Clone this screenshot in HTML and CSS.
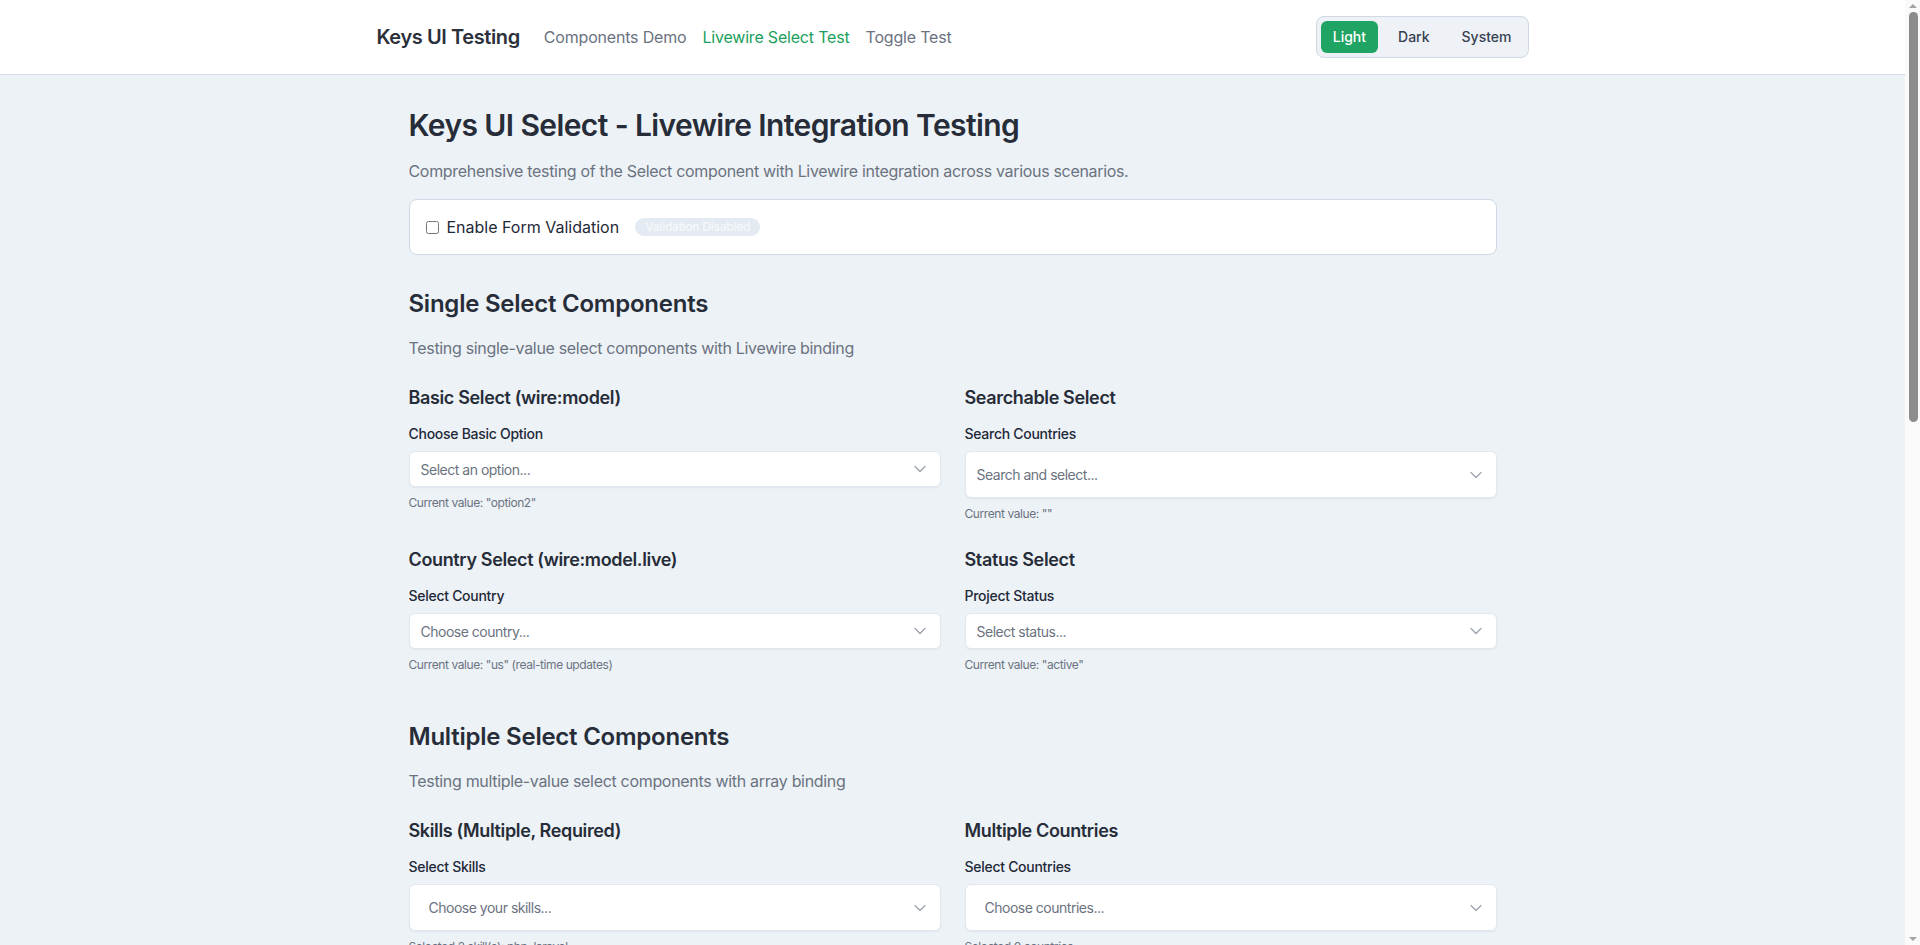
FILE: index.html
```html
<!DOCTYPE html>
<html lang="en">
<head>
<meta charset="utf-8">
<title>Keys UI Select - Livewire Integration Testing</title>
<link rel="stylesheet" href="styles.css">
</head>
<body>
<div class="shell">
<header class="topbar">
  <div class="topbar-inner">
    <div class="brand-group">
      <a class="brand" href="#">Keys UI Testing</a>
      <nav class="nav">
        <a class="nav-link" href="#">Components Demo</a>
        <a class="nav-link active" href="#">Livewire Select Test</a>
        <a class="nav-link" href="#">Toggle Test</a>
      </nav>
    </div>
    <div class="theme-switch">
      <button class="theme-btn active">Light</button>
      <button class="theme-btn">Dark</button>
      <button class="theme-btn">System</button>
    </div>
  </div>
</header>

<main class="page">
  <h1 class="page-title">Keys UI Select - Livewire Integration Testing</h1>
  <p class="lead">Comprehensive testing of the Select component with Livewire integration across various scenarios.</p>

  <div class="card validation-card">
    <label class="check-label"><input type="checkbox" class="check"> Enable Form Validation</label>
    <span class="badge">Validation Disabled</span>
  </div>

  <section class="section">
    <h2 class="section-title">Single Select Components</h2>
    <p class="section-desc">Testing single-value select components with Livewire binding</p>
    <div class="grid">
      <div class="field">
        <h3 class="field-title">Basic Select (wire:model)</h3>
        <label class="field-label">Choose Basic Option</label>
        <div class="select"><span>Select an option...</span><svg class="chev" width="12" height="8" viewBox="0 0 12 8"><path d="M1 1.5l5 5 5-5"/></svg></div>
        <p class="hint">Current value: "option2"</p>
      </div>
      <div class="field">
        <h3 class="field-title">Searchable Select</h3>
        <label class="field-label">Search Countries</label>
        <div class="select tall"><span>Search and select...</span><svg class="chev" width="12" height="8" viewBox="0 0 12 8"><path d="M1 1.5l5 5 5-5"/></svg></div>
        <p class="hint">Current value: ""</p>
      </div>
      <div class="field">
        <h3 class="field-title">Country Select (wire:model.live)</h3>
        <label class="field-label">Select Country</label>
        <div class="select"><span>Choose country...</span><svg class="chev" width="12" height="8" viewBox="0 0 12 8"><path d="M1 1.5l5 5 5-5"/></svg></div>
        <p class="hint">Current value: "us" (real-time updates)</p>
      </div>
      <div class="field">
        <h3 class="field-title">Status Select</h3>
        <label class="field-label">Project Status</label>
        <div class="select"><span>Select status...</span><svg class="chev" width="12" height="8" viewBox="0 0 12 8"><path d="M1 1.5l5 5 5-5"/></svg></div>
        <p class="hint">Current value: "active"</p>
      </div>
    </div>
  </section>

  <section class="section">
    <h2 class="section-title">Multiple Select Components</h2>
    <p class="section-desc">Testing multiple-value select components with array binding</p>
    <div class="grid">
      <div class="field">
        <h3 class="field-title">Skills (Multiple, Required)</h3>
        <label class="field-label">Select Skills</label>
        <div class="select multi"><span>Choose your skills...</span><svg class="chev" width="12" height="8" viewBox="0 0 12 8"><path d="M1 1.5l5 5 5-5"/></svg></div>
        <p class="hint">Selected 2 skill(s): php, laravel</p>
      </div>
      <div class="field">
        <h3 class="field-title">Multiple Countries</h3>
        <label class="field-label">Select Countries</label>
        <div class="select multi"><span>Choose countries...</span><svg class="chev" width="12" height="8" viewBox="0 0 12 8"><path d="M1 1.5l5 5 5-5"/></svg></div>
        <p class="hint">Selected 0 countries</p>
      </div>
      <div class="field">
        <h3 class="field-title">Tags (Multiple, Searchable)</h3>
        <label class="field-label">Select Tags</label>
        <div class="select multi"><span>Search tags...</span><svg class="chev" width="12" height="8" viewBox="0 0 12 8"><path d="M1 1.5l5 5 5-5"/></svg></div>
        <p class="hint">Selected tags: []</p>
      </div>
      <div class="field">
        <h3 class="field-title">Permissions (Max 3)</h3>
        <label class="field-label">Select Permissions</label>
        <div class="select multi"><span>Choose permissions...</span><svg class="chev" width="12" height="8" viewBox="0 0 12 8"><path d="M1 1.5l5 5 5-5"/></svg></div>
        <p class="hint">Selected permissions: []</p>
      </div>
    </div>
  </section>

  <section class="section">
    <h2 class="section-title">Advanced Features</h2>
    <p class="section-desc">Testing clearable, disabled, grouped and dependent selects</p>
    <div class="grid">
      <div class="field">
        <h3 class="field-title">Clearable Select</h3>
        <label class="field-label">Priority</label>
        <div class="select"><span>Select priority...</span><svg class="chev" width="12" height="8" viewBox="0 0 12 8"><path d="M1 1.5l5 5 5-5"/></svg></div>
        <p class="hint">Current value: "medium"</p>
      </div>
      <div class="field">
        <h3 class="field-title">Disabled Select</h3>
        <label class="field-label">Locked Field</label>
        <div class="select"><span>Cannot be changed...</span><svg class="chev" width="12" height="8" viewBox="0 0 12 8"><path d="M1 1.5l5 5 5-5"/></svg></div>
        <p class="hint">This select is disabled</p>
      </div>
      <div class="field">
        <h3 class="field-title">Grouped Options</h3>
        <label class="field-label">Select Framework</label>
        <div class="select"><span>Choose framework...</span><svg class="chev" width="12" height="8" viewBox="0 0 12 8"><path d="M1 1.5l5 5 5-5"/></svg></div>
        <p class="hint">Current value: ""</p>
      </div>
      <div class="field">
        <h3 class="field-title">Dependent Select</h3>
        <label class="field-label">Select City</label>
        <div class="select"><span>Select a country first...</span><svg class="chev" width="12" height="8" viewBox="0 0 12 8"><path d="M1 1.5l5 5 5-5"/></svg></div>
        <p class="hint">Depends on selected country</p>
      </div>
    </div>
  </section>

  <section class="section">
    <h2 class="section-title">Form Submission</h2>
    <p class="section-desc">Submit the form to test validation and data handling</p>
    <div class="card actions-card">
      <button class="btn btn-primary">Submit Form</button>
      <button class="btn">Reset Values</button>
      <button class="btn">Fill Sample Data</button>
    </div>
  </section>
</main>
</div>

<aside class="scrollbar" aria-hidden="true">
  <span class="sb-arrow sb-up"></span>
  <span class="sb-thumb"></span>
  <span class="sb-fill"></span>
  <span class="sb-arrow sb-down"></span>
</aside>
</body>
</html>
```

FILE: styles.css
```css
* {
  box-sizing: border-box;
}

body {
  margin: 0;
  background: #edf2f7;
  font-family: Inter, "Noto Sans", "Liberation Sans", sans-serif;
  color: #1f2937;
}

.shell {
  margin-right: 15px;
}

/* simulated classic browser scrollbar */
.scrollbar {
  position: fixed;
  top: 0;
  right: 0;
  width: 15px;
  height: 100vh;
  background: #fafafa;
  display: flex;
  flex-direction: column;
  align-items: center;
  z-index: 10;
}

.sb-arrow {
  flex: none;
  width: 15px;
  height: 12px;
  display: flex;
  align-items: center;
  justify-content: center;
}

.sb-arrow::before {
  content: "";
  width: 0;
  height: 0;
  border-left: 4px solid transparent;
  border-right: 4px solid transparent;
}

.sb-up::before {
  border-bottom: 4px solid #a3a3a3;
}

.sb-down::before {
  border-top: 4px solid #a3a3a3;
}

.sb-thumb {
  flex: none;
  width: 9px;
  height: 410px;
  margin-left: 2px;
  background: #8c8c8c;
  border-radius: 5px;
}

.sb-fill {
  flex: 1;
}

.topbar {
  background: #ffffff;
  border-bottom: 1px solid #d3dce6;
}

.topbar-inner {
  max-width: 1152px;
  height: 74px;
  margin: 0 auto;
  display: flex;
  align-items: center;
  justify-content: space-between;
}

.brand-group {
  display: flex;
  align-items: center;
  gap: 24px;
}

.brand {
  font-size: 20px;
  font-weight: 600;
  color: #2b303a;
  text-decoration: none;
  letter-spacing: -0.02em;
}

.nav {
  display: flex;
  gap: 16px;
}

.nav-link {
  font-size: 16px;
  color: #6b7280;
  text-decoration: none;
  letter-spacing: -0.012em;
}

.nav-link.active {
  color: #1a9f5c;
}

.theme-switch {
  display: flex;
  gap: 8px;
  padding: 4px;
  background: #eef2f7;
  border: 1px solid #cfd8e3;
  border-radius: 8px;
}

.theme-btn {
  font-family: inherit;
  font-size: 14px;
  font-weight: 500;
  line-height: 20px;
  padding: 6px 12px;
  border: 0;
  border-radius: 6px;
  background: transparent;
  color: #374151;
}

.theme-btn.active {
  background: #1fa463;
  color: #ffffff;
}

.page {
  max-width: 1152px;
  margin: 0 auto;
  padding: 32px;
}

.page-title {
  font-size: 30px;
  line-height: 36px;
  font-weight: 600;
  margin: 0 0 16px;
  color: #272d38;
  letter-spacing: -0.02em;
}

.lead {
  font-size: 16px;
  line-height: 24px;
  color: #6b7280;
  margin: 0 0 16px;
  letter-spacing: -0.02em;
}

.card {
  background: #ffffff;
  border: 1px solid #cfd8e3;
  border-radius: 8px;
}

.validation-card {
  display: flex;
  align-items: center;
  padding: 15px 16px;
  margin-bottom: 33px;
}

.check-label {
  display: flex;
  align-items: center;
  gap: 8px;
  font-size: 16px;
  line-height: 24px;
  color: #1f2937;
}

.check {
  width: 13px;
  height: 13px;
  margin: 0;
}

.badge {
  margin-left: 16px;
  font-size: 12px;
  font-weight: 500;
  line-height: 16px;
  padding: 1px 10px;
  border-radius: 999px;
  background: #e4eaf1;
  color: #f6f8fb;
  letter-spacing: -0.02em;
}

.section {
  margin-bottom: 48px;
}

.section-title {
  font-size: 24px;
  line-height: 32px;
  font-weight: 600;
  margin: 0 0 16px;
  color: #272d38;
  letter-spacing: -0.01em;
}

.section-desc {
  font-size: 16px;
  line-height: 24px;
  color: #6b7280;
  margin: 0 0 24px;
  letter-spacing: -0.02em;
}

.grid {
  display: grid;
  grid-template-columns: 1fr 1fr;
  gap: 24px;
}

.field-title {
  font-size: 18px;
  line-height: 28px;
  font-weight: 600;
  margin: 0 0 12px;
  color: #272d38;
  letter-spacing: -0.02em;
}

.field-label {
  display: block;
  font-size: 14px;
  line-height: 20px;
  font-weight: 500;
  margin-bottom: 7px;
  color: #1f2937;
  letter-spacing: -0.02em;
}

.select {
  display: flex;
  align-items: center;
  justify-content: space-between;
  height: 36px;
  padding: 0 14px 0 11px;
  background: #ffffff;
  border: 1px solid #e2e8f0;
  border-radius: 6px;
  box-shadow: 0 1px 2px rgba(15, 23, 42, 0.06);
  font-size: 14px;
  color: #6b7280;
  letter-spacing: -0.035em;
}

.select.tall {
  height: 47px;
}

.select.multi {
  height: 47px;
  padding-left: 19px;
}

.chev {
  flex: none;
  fill: none;
  stroke: #9ca3af;
  stroke-width: 1.3;
  stroke-linecap: round;
  stroke-linejoin: round;
}

.hint {
  font-size: 12px;
  line-height: 16px;
  color: #6b7280;
  margin: 8px 0 0;
  letter-spacing: -0.035em;
}

.actions-card {
  display: flex;
  gap: 12px;
  padding: 24px;
}

.btn {
  font-family: inherit;
  font-size: 14px;
  font-weight: 500;
  line-height: 20px;
  padding: 8px 16px;
  border: 1px solid #d1d9e3;
  border-radius: 6px;
  background: #ffffff;
  color: #374151;
}

.btn-primary {
  background: #1fa463;
  border-color: #1fa463;
  color: #ffffff;
}
```
